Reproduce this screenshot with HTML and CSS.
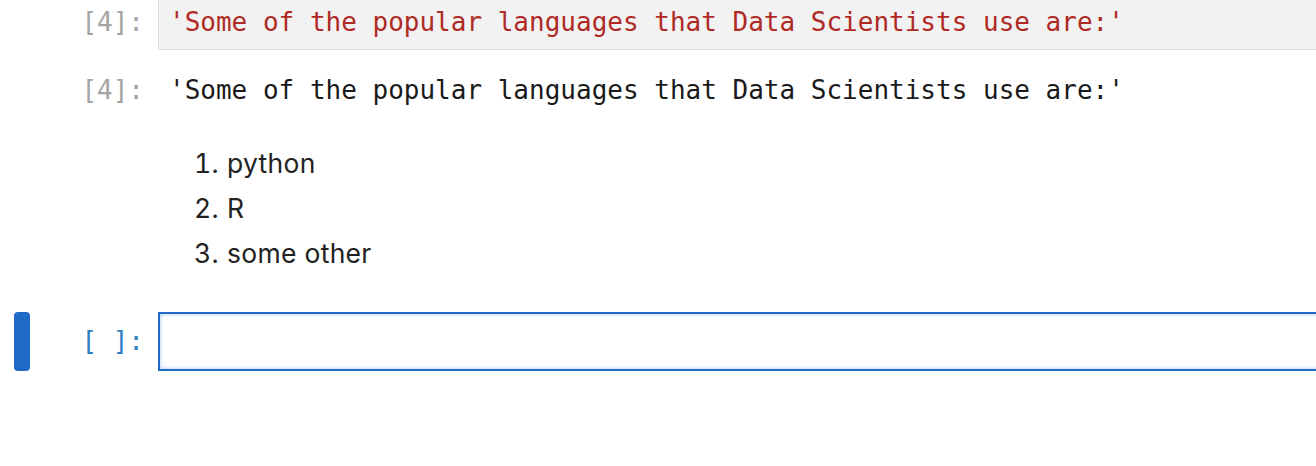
FILE: index.html
```html
<!DOCTYPE html>
<html>
<head>
<meta charset="utf-8">
<link rel="stylesheet" href="styles.css">
</head>
<body>
<div class="notebook">
  <div class="cell code-cell first">
    <div class="collapser"></div>
    <div class="prompt">[4]:</div>
    <div class="editor"><span class="str">'Some of the popular languages that Data Scientists use are:'</span></div>
  </div>
  <div class="cell output-row">
    <div class="collapser"></div>
    <div class="prompt">[4]:</div>
    <div class="output">'Some of the popular languages that Data Scientists use are:'</div>
  </div>
  <div class="cell md-cell">
    <div class="collapser"></div>
    <div class="prompt"></div>
    <div class="markdown">
      <ol>
        <li>python</li>
        <li>R</li>
        <li>some other</li>
      </ol>
    </div>
  </div>
  <div class="cell code-cell active">
    <div class="collapser"><div class="bar"></div></div>
    <div class="prompt">[&nbsp;]:</div>
    <div class="editor"></div>
  </div>
</div>
</body>
</html>
```

FILE: styles.css
```css
html, body {
  margin: 0;
  padding: 0;
  background: #ffffff;
  overflow: hidden;
}

.notebook {
  display: flex;
  flex-direction: column;
  margin-right: -12px;
}

.cell {
  display: flex;
  align-items: stretch;
}

.collapser {
  width: 30px;
  flex: none;
  display: flex;
}

.bar {
  width: 16px;
  margin-left: 14px;
  background: #2169c6;
  border-radius: 4px;
}

.prompt {
  width: 114px;
  padding-right: 14px;
  flex: none;
  text-align: right;
  font-family: "DejaVu Sans Mono", "Liberation Mono", monospace;
  font-size: 26px;
  line-height: 34px;
  color: #a3a3a3;
  padding-top: 11px;
}

.editor {
  flex: 1;
  min-width: 0;
  background: #f2f2f2;
  border: 1px solid #e0e0e0;
  padding: 10px;
  font-family: "DejaVu Sans Mono", "Liberation Mono", monospace;
  font-size: 26px;
  line-height: 34px;
  white-space: pre;
  height: 34px;
}

.first {
  margin-top: -6px;
}

.str {
  color: #b02a25;
}

.output-row {
  margin-top: 12px;
}

.output {
  flex: 1;
  padding: 11px 10px 0 11px;
  font-family: "DejaVu Sans Mono", "Liberation Mono", monospace;
  font-size: 26px;
  line-height: 34px;
  color: #1a1a1a;
  white-space: pre;
}

.md-cell {
  margin-top: 34px;
}

.markdown {
  flex: 1;
  font-family: Inter, "Noto Sans", sans-serif;
  font-size: 26.5px;
  letter-spacing: 0.3px;
  color: #222222;
}

.markdown ol {
  margin: 0;
  padding-left: 0;
  list-style: none;
  counter-reset: item;
}

.markdown li {
  line-height: 45px;
  counter-increment: item;
  padding-left: 36px;
}

.markdown li::before {
  content: counter(item) ".";
  display: inline-block;
  width: 33px;
  font-variant-numeric: tabular-nums;
}

.active {
  margin-top: 36px;
}

.active .prompt {
  color: #307fc1;
  padding-top: 12px;
}

.active .editor {
  background: #ffffff;
  border: 2px solid #2169c6;
  box-shadow: inset 0 0 4px rgba(100, 160, 230, 0.6);
  height: 35px;
  padding: 10px;
}
```
